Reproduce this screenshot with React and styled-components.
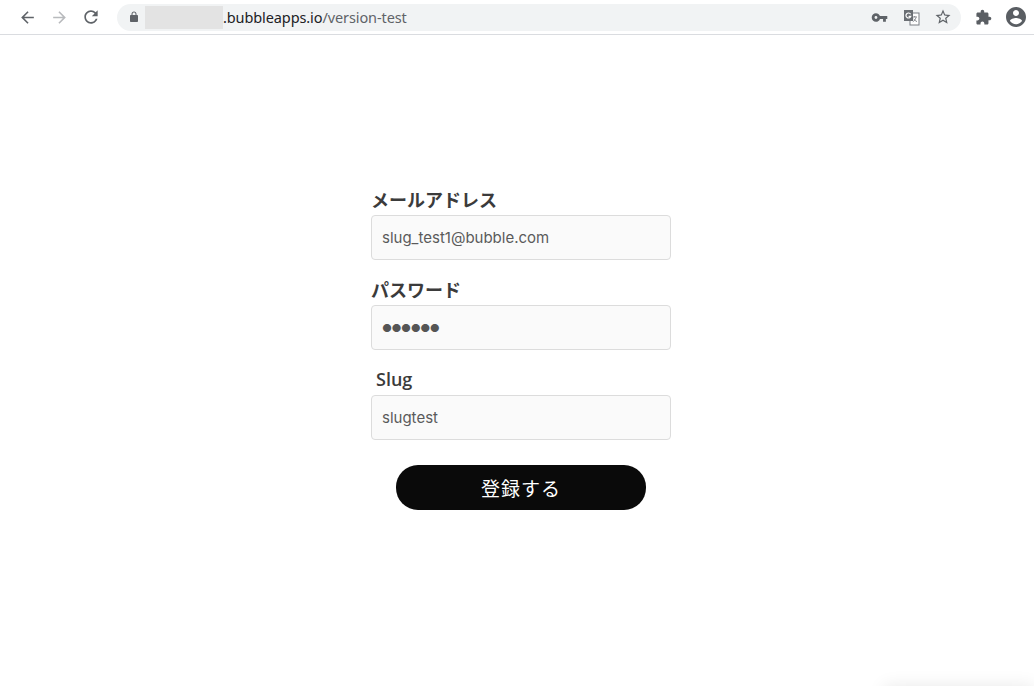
import React from "react";
import styled, { createGlobalStyle } from "styled-components";

const Global = createGlobalStyle`
  html, body { margin: 0; padding: 0; background: #fff; overflow: hidden; }
  body { width: 1034px; height: 686px; }
  * { box-sizing: border-box; }
`;

const Toolbar = styled.div`
  height: 35px;
  display: flex;
  align-items: center;
  border-bottom: 1px solid #dadce0;
  background: #fff;
  padding: 0 0 0 11px;
`;

const NavButton = styled.div`
  width: 32px;
  height: 28px;
  display: flex;
  align-items: center;
  justify-content: center;
  color: ${(p) => (p.$disabled ? "#b8babd" : "#5f6368")};
`;

const Omnibox = styled.div`
  margin-left: 10px;
  width: 844px;
  height: 27px;
  border-radius: 14px;
  background: #f1f3f4;
  display: flex;
  align-items: center;
  padding-left: 11px;
  font-family: "Noto Sans", "Open Sans", sans-serif;
  font-size: 14.5px;
`;

const Lock = styled.div`
  width: 12px;
  display: flex;
  color: #5f6368;
`;

const Blur = styled.div`
  margin-left: 5px;
  width: 78px;
  height: 23px;
  background: #e3e3e3;
`;

const Host = styled.span`
  color: #202124;
  letter-spacing: -0.1px;
`;

const Path = styled.span`
  color: #5f6368;
  letter-spacing: -0.1px;
`;

const OmniIcons = styled.div`
  margin-left: auto;
  display: flex;
  align-items: center;
  gap: 8px;
  padding-right: 6px;
`;

const IconSlot = styled.div`
  width: 24px;
  height: 24px;
  display: flex;
  align-items: center;
  justify-content: center;
  color: #5f6368;
`;

const RightIcons = styled.div`
  display: flex;
  align-items: center;
  gap: 9px;
  margin-left: 10px;
`;

const Main = styled.main`
  display: flex;
  justify-content: center;
  padding: 152px 0 0 8px;
`;

const Form = styled.form`
  width: 300px;
  display: flex;
  flex-direction: column;
  gap: 17px;
`;

const Field = styled.div`
  display: flex;
  flex-direction: column;
  gap: 4px;
`;

const Label = styled.label`
  height: 24px;
  line-height: 24px;
  padding-left: ${(p) => p.$indent || 0}px;
  font-family: ${(p) =>
    p.$latin
      ? '"Open Sans", "Noto Sans CJK JP", sans-serif'
      : '"Noto Sans CJK JP", "Open Sans", sans-serif'};
  font-size: 18px;
  font-weight: ${(p) => (p.$latin ? 600 : 700)};
  color: #3b3b3b;
`;

const Input = styled.div`
  height: 45px;
  border: 1px solid #dcdcdc;
  border-radius: 4px;
  background: #fafafa;
  display: flex;
  align-items: center;
  padding-left: 10px;
  font-family: Inter, Roboto, sans-serif;
  font-size: 15px;
  color: #5a5a5a;
  letter-spacing: ${(p) => (p.$dots ? "-1px" : "0")};
`;

const Dots = styled.span`
  font-size: 11px;
  letter-spacing: -0.5px;
  color: #555;
`;

const ButtonRow = styled.div`
  display: flex;
  justify-content: center;
  padding-top: 8px;
`;

const Submit = styled.div`
  width: 250px;
  height: 45px;
  border-radius: 22px;
  background: #0a0a0a;
  color: #fff;
  display: flex;
  align-items: center;
  justify-content: center;
  font-family: "Noto Sans CJK JP", sans-serif;
  font-size: 19px;
  font-weight: 400;
  letter-spacing: 1px;
`;

const CornerShade = styled.div`
  position: fixed;
  right: 0;
  bottom: -22px;
  width: 150px;
  height: 22px;
  box-shadow: 0 0 18px rgba(0, 0, 0, 0.09);
  background: #fff;
`;

const Icon = ({ d, size = 18, color = "currentColor" }) => (
  <svg width={size} height={size} viewBox="0 0 24 24" fill={color}>
    <path d={d} />
  </svg>
);

const P = {
  back: "M20 11H7.83l5.59-5.59L12 4l-8 8 8 8 1.41-1.41L7.83 13H20v-2z",
  fwd: "M12 4l-1.41 1.41L16.17 11H4v2h12.17l-5.58 5.59L12 20l8-8z",
  reload:
    "M17.65 6.35C16.2 4.9 14.21 4 12 4c-4.42 0-7.99 3.58-7.99 8s3.57 8 7.99 8c3.73 0 6.84-2.55 7.73-6h-2.08c-.82 2.33-3.04 4-5.65 4-3.31 0-6-2.69-6-6s2.69-6 6-6c1.66 0 3.14.69 4.22 1.78L13 11h7V4l-2.35 2.35z",
  lock:
    "M18 8h-1V6c0-2.76-2.24-5-5-5S7 3.24 7 6v2H6c-1.1 0-2 .9-2 2v10c0 1.1.9 2 2 2h12c1.1 0 2-.9 2-2V10c0-1.1-.9-2-2-2zM9 6c0-1.66 1.34-3 3-3s3 1.34 3 3v2H9V6z",
  key: "M12.65 10C11.830 7.67 9.61 6 7 6c-3.31 0-6 2.69-6 6s2.69 6 6 6c2.61 0 4.83-1.67 5.65-4H17v4h4v-4h2v-4H12.65zM7 14c-1.1 0-2-.9-2-2s.9-2 2-2 2 .9 2 2-.9 2-2 2z",
  star:
    "M22 9.24l-7.19-.62L12 2 9.19 8.63 2 9.24l5.46 4.73L5.82 21 12 17.27 18.18 21l-1.63-7.03L22 9.24zM12 15.4l-3.76 2.27 1-4.28-3.32-2.88 4.38-.38L12 6.1l1.71 4.04 4.380.38-3.32 2.88 1 4.28L12 15.4z",
  puzzle:
    "M20.5 11H19V7c0-1.1-.9-2-2-2h-4V3.5C13 2.12 11.88 1 10.5 1S8 2.12 8 3.5V5H4c-1.1 0-1.99.9-1.99 2v3.8H3.5c1.49 0 2.7 1.21 2.7 2.7s-1.21 2.7-2.7 2.7H2V20c0 1.1.9 2 2 2h3.8v-1.5c0-1.49 1.21-2.7 2.7-2.7 1.490 0 2.7 1.21 2.7 2.7V22H17c1.1 0 2-.9 2-2v-4h1.5c1.38 0 2.5-1.12 2.5-2.5S21.88 11 20.5 11z",
  account:
    "M12 2C6.48 2 2 6.48 2 12s4.48 10 10 10 10-4.48 10-10S17.52 2 12 2zm0 3c1.66 0 3 1.34 3 3s-1.34 3-3 3-3-1.34-3-3 1.34-3 3-3zm0 14.2c-2.5 0-4.71-1.28-6-3.22.03-1.99 4-3.08 6-3.08 1.99 0 5.97 1.09 6 3.08-1.29 1.94-3.5 3.22-6 3.22z",
};

const TranslateIcon = () => (
  <svg width="17" height="17" viewBox="0 0 17 17">
    <rect x="7" y="4" width="9" height="12" fill="#fff" stroke="#7a7e83" strokeWidth="1" />
    <path d="M9.5 8h4.5M11.7 7v1M13 8.5c-.6 2-1.8 3.5-3.2 4.3M10.6 10c.9 1.1 2 2 3.4 2.6" stroke="#7a7e83" strokeWidth="0.9" fill="none" />
    <rect x="1" y="1" width="9" height="11" fill="#6b6f74" />
    <path d="M7.6 5.2A2.5 2.5 0 1 0 7.8 7.4H5.6" stroke="#fff" strokeWidth="1.2" fill="none" />
  </svg>
);

export default function App() {
  return (
    <>
      <Global />
      <Toolbar>
        <NavButton>
          <Icon d={P.back} size={19} />
        </NavButton>
        <NavButton $disabled>
          <Icon d={P.fwd} size={19} />
        </NavButton>
        <NavButton>
          <Icon d={P.reload} size={20} />
        </NavButton>
        <Omnibox>
          <Lock>
            <Icon d={P.lock} size={12} />
          </Lock>
          <Blur />
          <Host>.bubbleapps.io</Host>
          <Path>/version-test</Path>
          <OmniIcons>
            <IconSlot>
              <Icon d={P.key} size={17} />
            </IconSlot>
            <IconSlot>
              <TranslateIcon />
            </IconSlot>
            <IconSlot>
              <Icon d={P.star} size={18} />
            </IconSlot>
          </OmniIcons>
        </Omnibox>
        <RightIcons>
          <IconSlot>
            <Icon d={P.puzzle} size={17} color="#5a5e63" />
          </IconSlot>
          <IconSlot>
            <Icon d={P.account} size={24} color="#5a5e63" />
          </IconSlot>
        </RightIcons>
      </Toolbar>
      <Main>
        <Form>
          <Field>
            <Label>メールアドレス</Label>
            <Input>slug_test1@bubble.com</Input>
          </Field>
          <Field>
            <Label>パスワード</Label>
            <Input>
              <Dots>●●●●●●</Dots>
            </Input>
          </Field>
          <Field>
            <Label $latin $indent={5}>Slug</Label>
            <Input>slugtest</Input>
          </Field>
          <ButtonRow>
            <Submit>登録する</Submit>
          </ButtonRow>
        </Form>
      </Main>
      <CornerShade />
    </>
  );
}
